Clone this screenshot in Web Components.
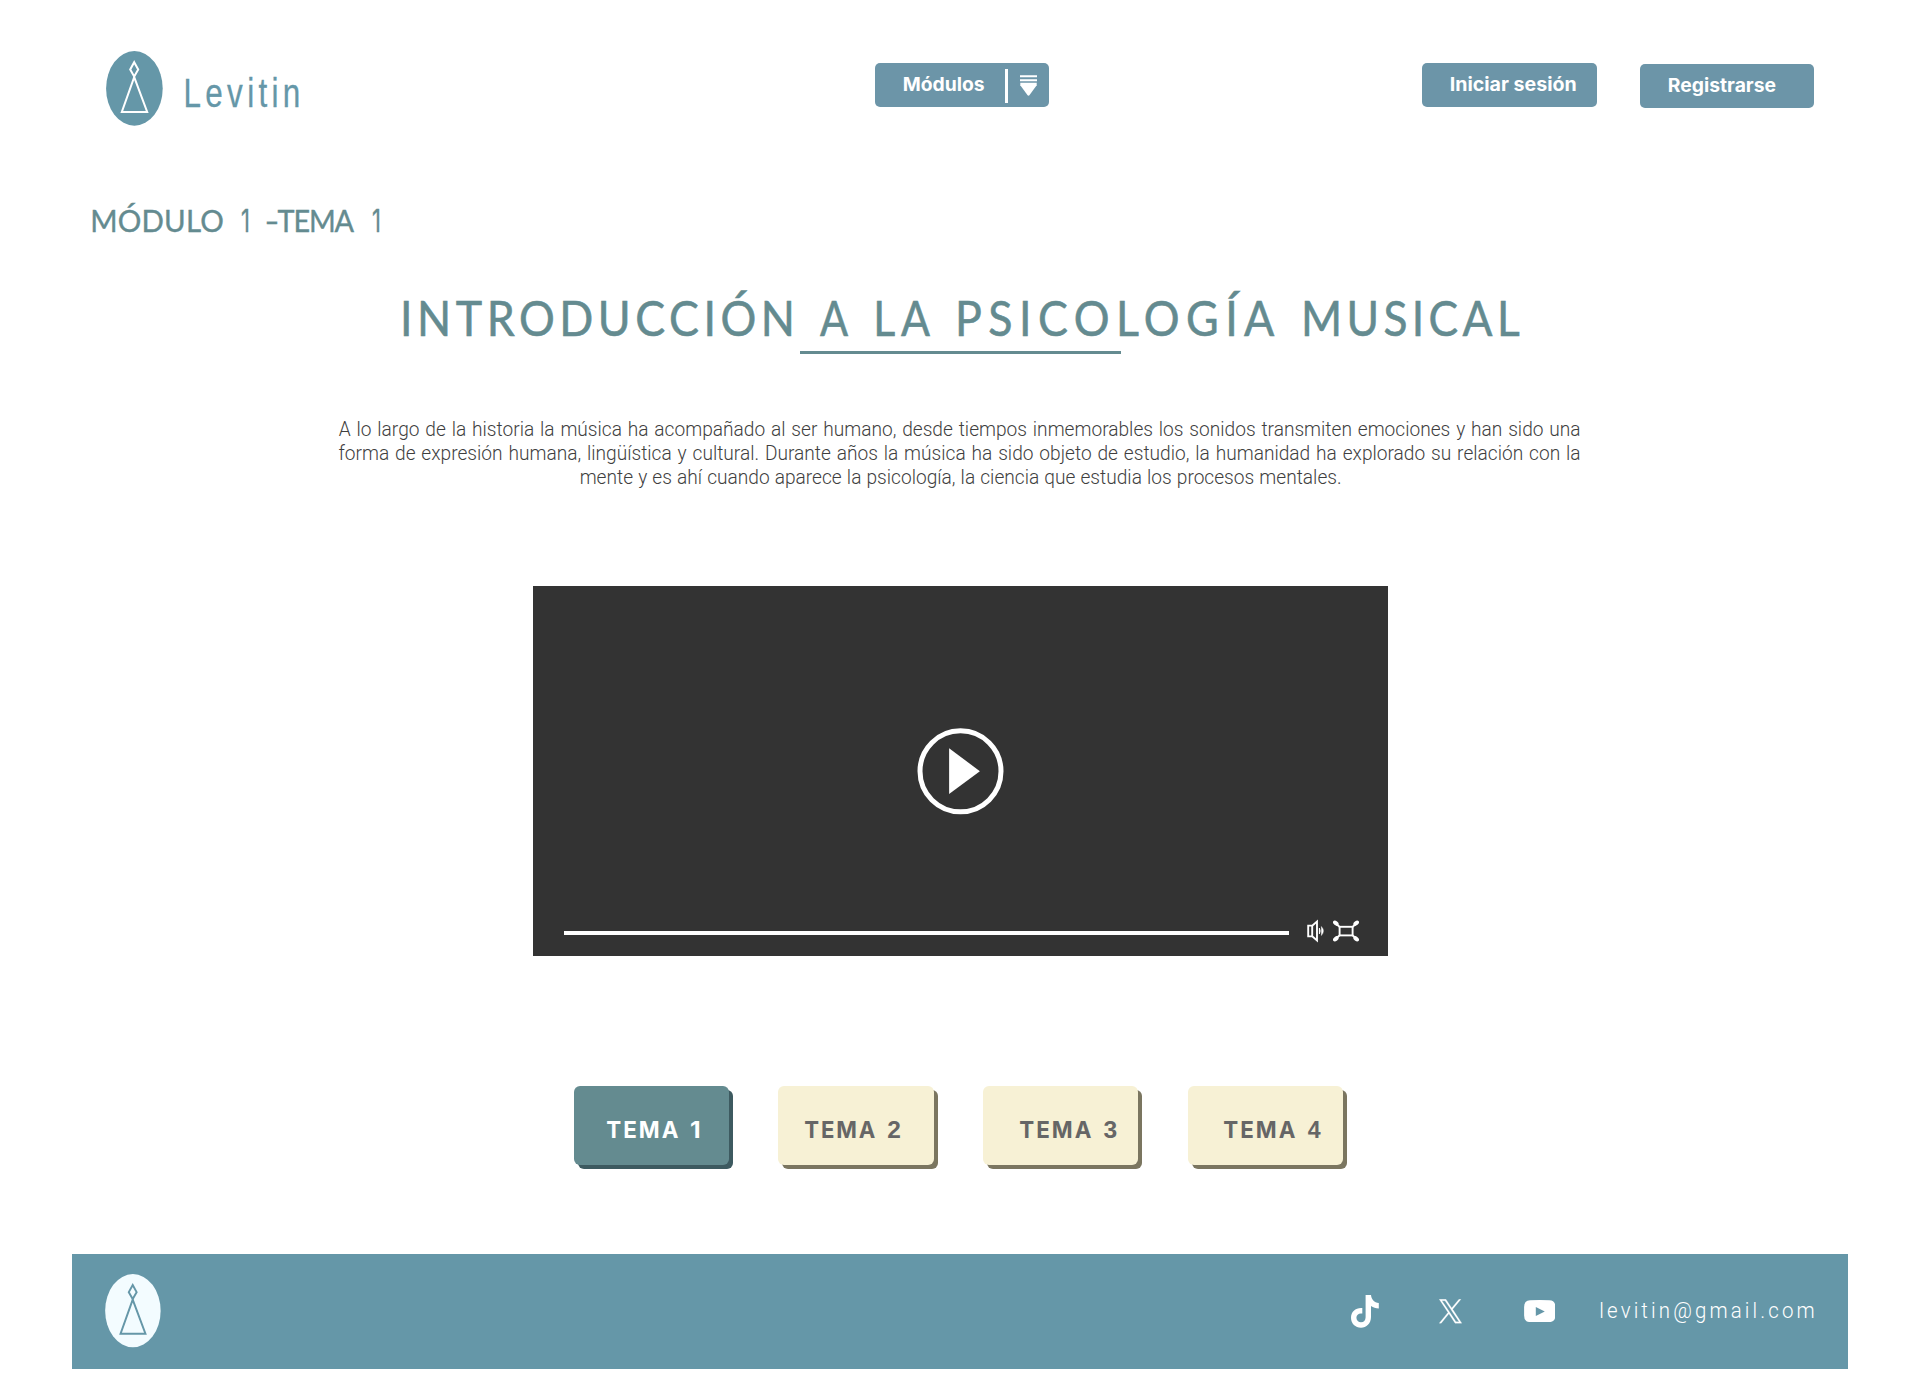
<!DOCTYPE html>
<html lang="es">
<head>
<meta charset="utf-8">
<title>Levitin – Módulo 1</title>
<style>
html,body{margin:0;padding:0;background:#fff}
body{width:1921px;height:1390px;overflow:hidden;font-family:"Liberation Sans",sans-serif}
</style>
</head>
<body>
<levitin-page></levitin-page>
<script>
const ctx = document.createElement('canvas').getContext('2d');

/* One line of text, sized by cap height and inked width.
   sx: horizontal glyph scale; fill: "letter" or "word" takes up the remaining width. */
customElements.define('fit-line', class extends HTMLElement {
  connectedCallback() {
    if (this.shadowRoot) return;
    const root = this.attachShadow({mode: 'open'});
    const a = (n, d) => this.getAttribute(n) || d;
    const w = +a('w', 100), cap = +a('cap', 14), weight = a('weight', '400');
    const family = a('family', 'Liberation Sans');
    const text = this.textContent.trim();
    ctx.font = `${weight} 200px "${family}", sans-serif`;
    const size = cap / (ctx.measureText('H').actualBoundingBoxAscent / 200);
    const m = ctx.measureText(text), k = size / 200;
    const left = m.actualBoundingBoxLeft * k, ink = left + m.actualBoundingBoxRight * k;
    const asc = m.fontBoundingBoxAscent * k, desc = m.fontBoundingBoxDescent * k;
    let sx = a('sx', 'auto'), extra = '';
    if (sx === 'auto') sx = w / ink;
    else {
      sx = +sx;
      const words = a('fill', 'letter') === 'word';
      const n = words ? text.split(' ').length - 1 : text.length - 1;
      extra = n ? `${words ? 'word' : 'letter'}-spacing:${(w / sx - ink) / n}px;` : '';
    }
    const dy = cap - (cap / 2 + (asc - desc) / 2);
    root.innerHTML = `<style>
      :host{display:block;flex:none;width:${w}px;height:${cap}px;color:inherit}
      span{display:block;width:max-content;white-space:pre;line-height:${cap}px;
        font:${weight} ${size}px/${cap}px "${family}",sans-serif;${extra}
        transform-origin:0 50%;transform:translate(${left * sx}px,${dy}px) scaleX(${sx})}
      </style><span><slot></slot></span>`;
  }
});

function define(name, html) {
  const t = document.createElement('template');
  t.innerHTML = html;
  customElements.define(name, class extends HTMLElement {
    constructor() {
      super();
      this.attachShadow({mode: 'open'}).append(t.content.cloneNode(true));
    }
  });
}

define('brand-mark', `<style>:host{display:block;flex:none;width:57px;height:75px}svg{display:block;width:100%;height:100%}</style>
<svg viewBox="0 0 57 75"><ellipse cx="28.4" cy="37.4" rx="28.3" ry="37.3" fill="var(--disc,#6597a8)"/>
<g fill="none" stroke="var(--line,#fff)" stroke-width="2" stroke-linejoin="miter"><path d="M28.2 11.2L32.2 18.5L28.2 25.5L24.2 18.5Z"/><path d="M28.2 26.2L41.2 61H15.8Z"/></g></svg>`);

define('nav-button', `<style>:host{display:flex;flex:none;box-sizing:border-box;width:174.3px;height:43.3px;border-radius:5px;background:#6c95a8;color:#fff;padding:15px 0 0 29px}</style><slot></slot>`);

define('top-bar', `<style>
:host{display:flex;align-items:flex-start;padding:51px 0 0 105.6px}
.word{margin:27.5px 0 0 23.6px;color:#6597a8;-webkit-text-stroke:.3px #6597a8}
.mod{margin:12.4px 0 0 576.5px}.in{margin:12.4px 0 0 373px}.reg{margin:13.4px 0 0 43.2px}
.rule{flex:none;width:2.2px;height:33.5px;margin:-9.2px 0 0 21.3px;background:#fff}
.drop{flex:none;margin:-3px 0 0 12.8px;display:block}
</style>
<brand-mark></brand-mark>
<fit-line class="word" w="112.4" cap="28.2" sx="0.77">Levitin</fit-line>
<nav-button class="mod"><fit-line family="Inter" w="80" cap="13.6" weight="700">Módulos</fit-line><div class="rule"></div>
<svg class="drop" width="17" height="22" viewBox="0 0 17 22"><path d="M0 1.3H17M0 5.2H17" stroke="#fff" stroke-width="1.9"/><path d="M.3 7.8H16.7V10.2L9.6 20Q8.5 21.4 7.4 20L.3 10.2Z" fill="#fff"/></svg></nav-button>
<nav-button class="in"><fit-line family="Inter" w="124.6" cap="13.6" weight="700">Iniciar sesión</fit-line></nav-button>
<nav-button class="reg"><fit-line family="Inter" w="106.4" cap="13.6" weight="700">Registrarse</fit-line></nav-button>`);

define('module-title', `<style>
:host{display:block;color:#648b90}
.crumb,.title{display:flex}
.crumb{padding-left:93px;height:91.5px;-webkit-text-stroke:.4px #648b90}
.title{padding-left:404px;height:50px;-webkit-text-stroke:.6px #648b90}
.line{width:321.5px;height:3.3px;margin-left:799.5px;background:#648b90}
</style>
<div class="crumb"><fit-line family="Lato" w="129.5" cap="22.8" sx="0.93">MÓDULO</fit-line><fit-line family="Inter" style="margin-left:19.2px" w="6" cap="22.8">1</fit-line><fit-line family="Lato" style="margin-left:19.6px" w="10" cap="22.8">-</fit-line><fit-line family="Lato" style="margin-left:1px" w="76" cap="22.8" sx="0.91">TEMA</fit-line><fit-line family="Inter" style="margin-left:18.8px" w="6" cap="22.8">1</fit-line></div>
<div class="title"><fit-line family="Lato" w="387" cap="35" sx="0.92">INTRODUCCIÓN</fit-line><fit-line family="Lato" style="margin-left:28.5px" w="28" cap="35">A</fit-line><fit-line family="Lato" style="margin-left:29.5px" w="53" cap="35" sx="0.88">LA</fit-line><fit-line family="Lato" style="margin-left:28.5px" w="315.3" cap="35" sx="0.92">PSICOLOGÍA</fit-line><fit-line family="Lato" style="margin-left:31px" w="214" cap="35" sx="0.91">MUSICAL</fit-line></div>
<div class="line"></div>`);

define('intro-text', `<style>:host{display:flex;flex-direction:column;gap:9.9px;padding:68.7px 0 0 339px;color:#3f3f3f;height:163.7px;box-sizing:border-box}</style>
<fit-line family="Roboto" weight="300" w="1240.5" cap="14.1" sx="0.97" fill="word">A lo largo de la historia la música ha acompañado al ser humano, desde tiempos inmemorables los sonidos transmiten emociones y han sido una</fit-line>
<fit-line family="Roboto" weight="300" w="1240.5" cap="14.1" sx="0.97" fill="word">forma de expresión humana, lingüística y cultural. Durante años la música ha sido objeto de estudio, la humanidad ha explorado su relación con la</fit-line>
<fit-line family="Roboto" weight="300" style="margin-left:241.5px" w="759" cap="14.1" sx="0.97" fill="word">mente y es ahí cuando aparece la psicología, la ciencia que estudia los procesos mentales.</fit-line>`);

define('video-player', `<style>
:host{display:flex;flex-direction:column;align-items:center;box-sizing:border-box;width:855px;height:370px;background:#333;padding-top:141.3px}
svg{display:block;flex:none}
.controls{display:flex;align-items:center;width:100%;margin-top:105.5px;height:22px}
.track{width:725px;height:3.6px;background:#fff;margin:3px 0 0 31.5px}
.vol{margin-left:18.3px}.full{margin-left:8px}
</style>
<svg width="87" height="87" viewBox="0 0 87 87"><circle cx="43.5" cy="43.3" r="40.5" fill="none" stroke="#fff" stroke-width="5"/><path d="M32.1 20.3L62.9 43.2L32.1 65.9Z" fill="#fff"/></svg>
<div class="controls"><div class="track"></div>
<svg class="vol" width="18" height="24" viewBox="0 0 18 24"><path d="M1.2 6.6H5.2V17.4H1.2ZM5.2 6.8L10 2.6V21.4L5.2 17.2" fill="none" stroke="#fff" stroke-width="1.9"/><path d="M12.4 9.2Q13.8 12 12.4 14.8Z" fill="#fff" stroke="#fff" stroke-width="1"/><path d="M14.4 7.5Q18.4 12 14.4 16.5Z" fill="#fff" stroke="#fff" stroke-width=".4"/></svg>
<svg class="full" width="26" height="22" viewBox="0 0 26 22"><rect x="6.6" y="6.8" width="13" height="8.6" fill="none" stroke="#fff" stroke-width="1.9"/><path d="M2 3L6.8 7M24 3L19.4 7M2 19L6.8 15.2M24 19L19.4 15.2" stroke="#fff" stroke-width="1.8"/><g fill="#fff"><ellipse cx="2.8" cy="3.2" rx="3.2" ry="2.1" transform="rotate(38 2.8 3.2)"/><ellipse cx="23.2" cy="3.2" rx="3.2" ry="2.1" transform="rotate(-38 23.2 3.2)"/><ellipse cx="2.8" cy="18.8" rx="3.2" ry="2.1" transform="rotate(-38 2.8 18.8)"/><ellipse cx="23.2" cy="18.8" rx="3.2" ry="2.1" transform="rotate(38 23.2 18.8)"/></g></svg></div>`);

define('topic-card', `<style>
:host{display:flex;box-sizing:border-box;width:155.5px;height:79px;border-radius:6px;background:#f7f1d5;color:#666;box-shadow:4px 4px 0 #7b7660;padding-top:35.1px}
:host([active]){background:#648b90;color:#fff;box-shadow:4px 4px 0 #3d5a60}
</style><slot></slot>`);

define('topic-list', `<style>:host{display:flex;gap:49.2px;margin:129.4px 0 0 573.5px}.n{margin-left:13px}</style>
<topic-card active><fit-line family="Inter" style="margin-left:33.2px" w="71" cap="17.2" weight="700" sx="0.95">TEMA</fit-line><fit-line family="Inter" class="n" w="8" cap="17.2" weight="700">1</fit-line></topic-card>
<topic-card><fit-line family="Inter" style="margin-left:27.2px" w="69.8" cap="17.2" weight="700" sx="0.94">TEMA</fit-line><fit-line class="n" w="12" cap="17.2" weight="700">2</fit-line></topic-card>
<topic-card><fit-line family="Inter" style="margin-left:36.8px" w="71" cap="17.2" weight="700" sx="0.95">TEMA</fit-line><fit-line class="n" w="12.3" cap="17.2" weight="700">3</fit-line></topic-card>
<topic-card><fit-line family="Inter" style="margin-left:36px" w="71" cap="17.2" weight="700" sx="0.95">TEMA</fit-line><fit-line class="n" w="12.5" cap="17.2" weight="700">4</fit-line></topic-card>`);

define('page-footer', `<style>
:host{display:flex;align-items:flex-start;box-sizing:border-box;width:1776.2px;height:115px;margin:88.9px 0 0 72px;padding:20.6px 0 0 33.4px;background:#6597a8;color:#fff}
brand-mark{width:56px;height:73.5px;--disc:#f3fcff;--line:#6597a8}
svg{display:block;flex:none}
</style>
<brand-mark></brand-mark>
<svg style="margin:20.4px 0 0 1189.4px" width="28" height="33" viewBox="0 0 28 33"><path d="M14.6 0H20C20.3 4.3 23.3 7.7 27.8 8V13.5C24.8 13.5 22.2 12.6 20 11V22C20 28.6 15.4 32.7 10 32.7C4.4 32.7 0 28.4 0 22.7C0 16.4 5 12.4 11.3 13V18.6C8.1 17.8 5.4 19.7 5.4 22.7C5.4 25.4 7.5 27.2 10 27.2C12.8 27.2 14.6 25.2 14.6 22.2Z" fill="#fff"/></svg>
<svg style="margin:24.8px 0 0 60.6px" width="23" height="24.4" viewBox="0 0 23 24.4"><path fill="#fff" stroke="#fff" stroke-width=".25" fill-rule="evenodd" d="M13.7 10.3L22 .2H20L12.7 9L6.9 .2H.2L9 13.4L.2 24.2H2.2L9.9 14.8L16.1 24.2H22.8ZM10.9 13.6L10 12.2L2.9 1.8H6L11.8 10.3L12.7 11.7L20.1 22.7H17Z"/></svg>
<svg style="margin:25.4px 0 0 61.5px" width="31.5" height="22.4" viewBox="0 0 31.5 22.4"><path fill="#fff" fill-rule="evenodd" d="M6 .3Q15.7-.3 25.5.3Q31.4.5 31.4 7V15.4Q31.4 21.9 25.5 22.1Q15.7 22.7 6 22.1Q.1 21.9 .1 15.4V7Q.1.5 6 .3ZM11.8 7V16L20.8 11.5Z"/></svg>
<fit-line style="margin:28.3px 0 0 45.2px" family="Roboto" weight="300" w="212.4" cap="15.9" sx="0.92">levitin@gmail.com</fit-line>`);

define('levitin-page', `<style>:host{display:flex;flex-direction:column;width:1921px;height:1390px}:host>*,top-bar,module-title,intro-text,video-player,topic-list,page-footer{flex:none}top-bar{box-sizing:border-box;height:209.5px}video-player{margin:68.5px 0 0 532.7px}</style>
<top-bar></top-bar><module-title></module-title><intro-text></intro-text><video-player></video-player><topic-list></topic-list><page-footer></page-footer>`);
</script>
</body>
</html>
